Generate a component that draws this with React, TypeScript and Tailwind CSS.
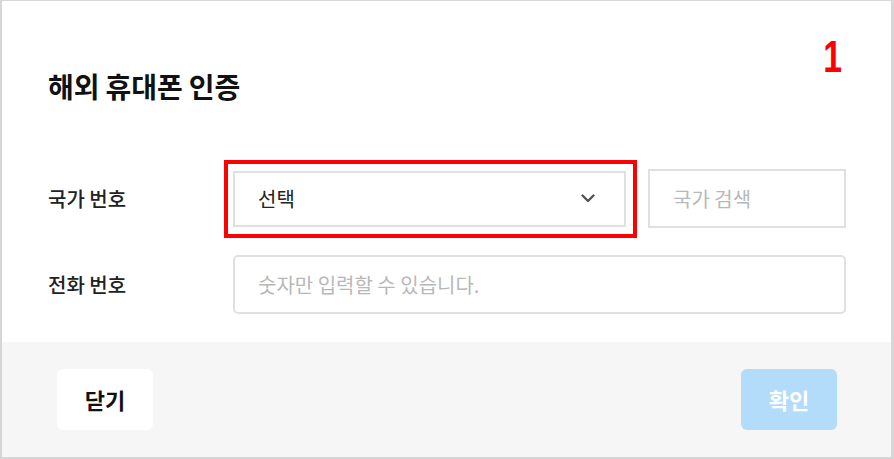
import React from "react";

const KR = "font-['Noto_Sans_CJK_KR','Noto_Sans',sans-serif]";

function Chevron() {
  return (
    <svg width="14" height="9" viewBox="0 0 14 9" fill="none" className="text-[#555]">
      <polyline points="1.5,1.5 7,7 12.5,1.5" stroke="currentColor" strokeWidth="2.4" strokeLinecap="round" strokeLinejoin="round" />
    </svg>
  );
}

export default function App() {
  return (
    <div className={`w-[894px] h-[459px] bg-white border-2 border-t-[1.5px] border-r-[3px] border-[#d6d6d6] flex flex-col relative ${KR}`}>
      {/* annotation number */}
      <span className="absolute right-[49px] top-[33px] inline-block origin-right scale-x-75 text-[45px] leading-none font-bold text-[#ff0000] font-['Liberation_Sans',sans-serif]">
        1
      </span>

      {/* body */}
      <div className="flex-1 pl-[46px] pr-[45px]">
        <h1 className="mt-[66px] text-[28px] leading-[38px] font-bold text-[#111] tracking-[-0.1px]">
          해외 휴대폰 인증
        </h1>

        <div className="mt-[64px] flex items-center">
          <span className="w-[185px] text-[20px] font-medium text-[#222]">국가 번호</span>
          <div className="relative">
            <div className="w-[393px] h-[56px] border-2 border-[#e0e0e0] flex items-center justify-between pl-[23px] pr-[29px]">
              <span className="text-[20px] text-[#222]">선택</span>
              <Chevron />
            </div>
            <div className="absolute -left-[9px] -right-[11px] -top-[11px] -bottom-[11px] border-4 border-[#ff0000] pointer-events-none" />
          </div>
          <div className="ml-[22px] w-[198px] h-[59px] border-2 border-[#e0e0e0] flex items-center pl-[23px]">
            <span className="text-[20px] text-[#b8b8b8]">국가 검색</span>
          </div>
        </div>

        <div className="mt-[27px] flex items-center">
          <span className="w-[185px] text-[20px] text-[#222] font-medium">전화 번호</span>
          <div className="w-[613px] h-[59px] border-2 border-[#e0e0e0] rounded-[5px] flex items-center pl-[23px]">
            <span className="text-[20px] text-[#b8b8b8]">숫자만 입력할 수 있습니다.</span>
          </div>
        </div>
      </div>

      {/* footer */}
      <div className="h-[115px] bg-[#f6f6f6] flex items-center justify-between pl-[55px] pr-[54px]">
        <button className="w-[96px] h-[61px] bg-white rounded-[6px] text-[22px] font-bold text-[#111]">
          닫기
        </button>
        <button className="w-[96px] h-[61px] bg-[#b3dbfa] rounded-[6px] text-[22px] font-bold text-white">
          확인
        </button>
      </div>
    </div>
  );
}
